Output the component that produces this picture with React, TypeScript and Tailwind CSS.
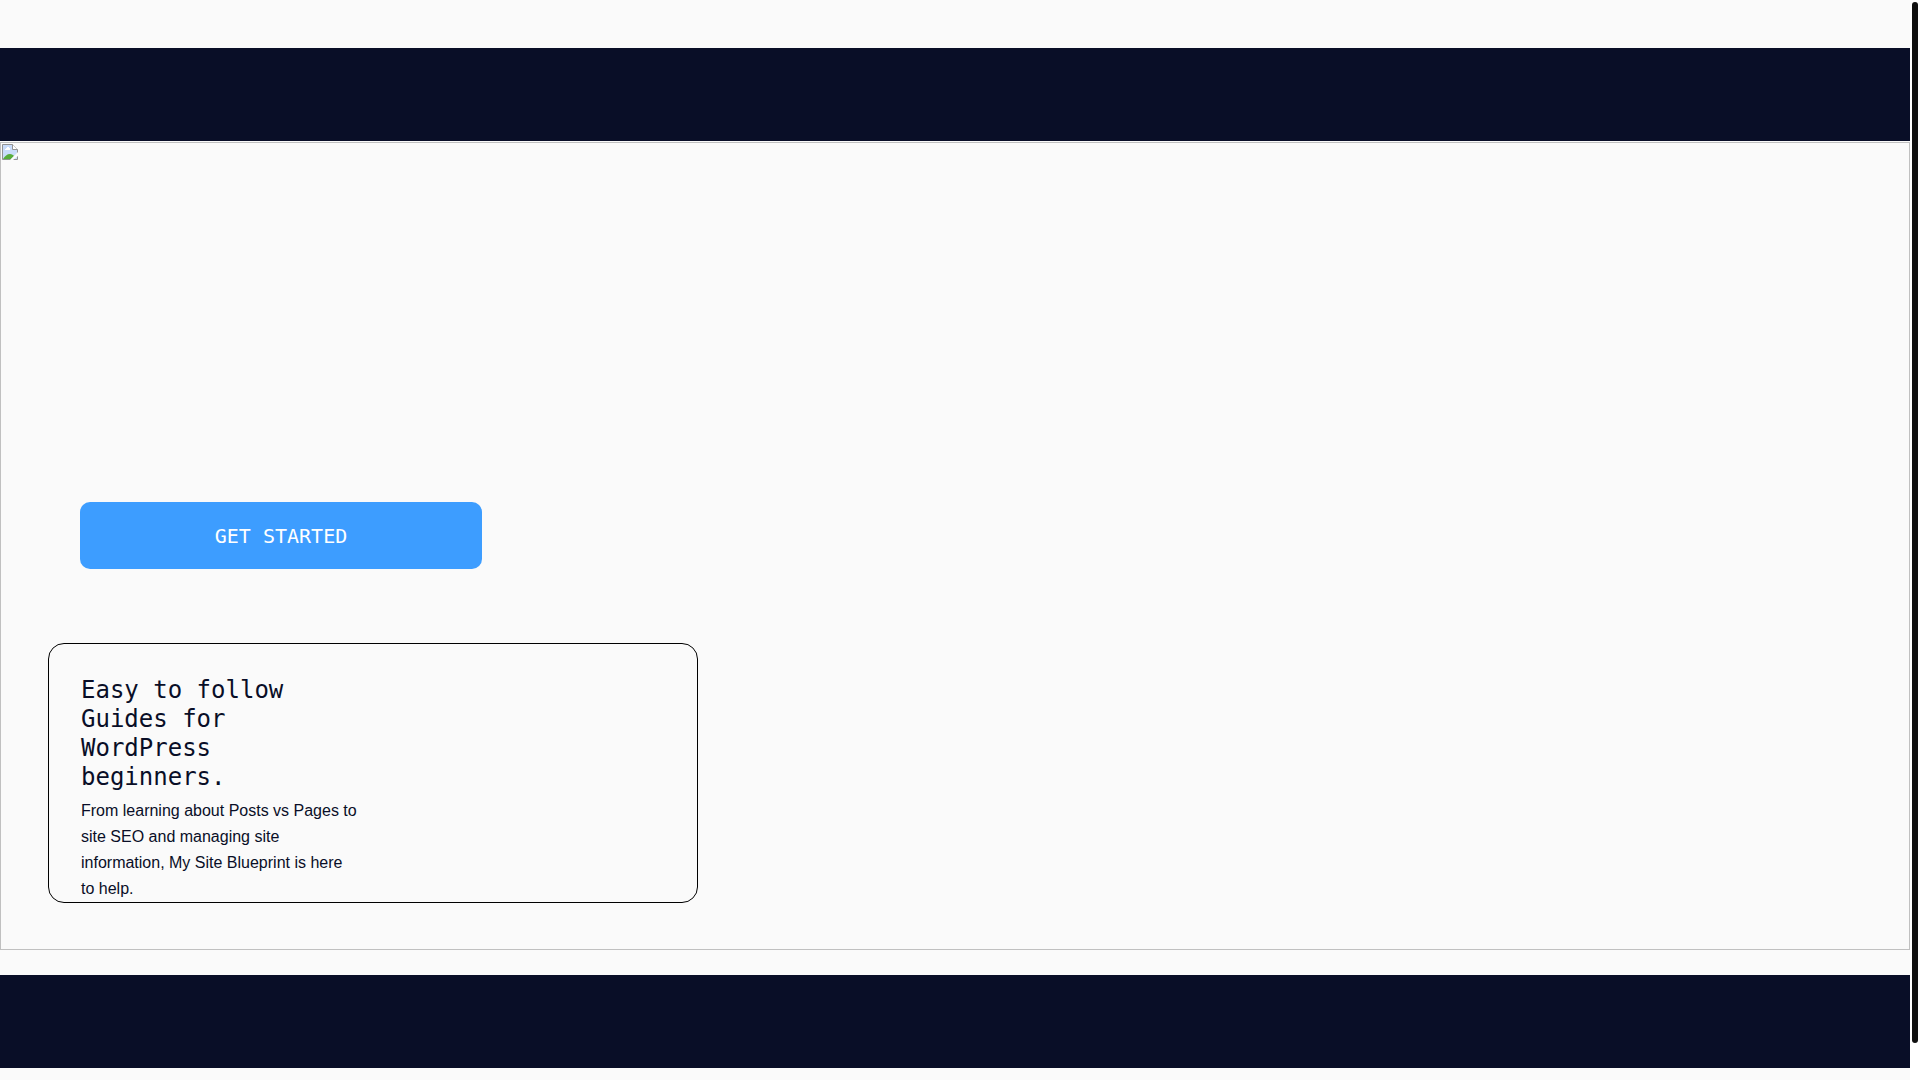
function BrokenImageIcon() {
  return (
    <svg className="m-px" width="16" height="16" viewBox="0 0 16 16" fill="none" aria-hidden="true">
      <path d="M0.5 0.5h10l5 5v10h-15z" fill="#c9dcfa" />
      <path d="M3 5h1V4h1V3h2v1h1v2H3z" fill="#fff" />
      <path d="M1 15c2-3 4-5 7-5 2 0 3 1 4 2l-3 3z" fill="#57ad3b" />
      <path d="M0.5 0.5h10l5 5v10h-15z" stroke="#929292" />
      <path d="M10.5 0.5v5h5" fill="#fff" stroke="#929292" />
      <path d="M16 8L8 16h3l5-4z" fill="#fafafa" />
    </svg>
  )
}

function Band() {
  return <div className="h-[93px] bg-[#090e27]" />
}

function GuideCard() {
  return (
    <section className="ml-[47px] w-[650px] max-w-full rounded-2xl border border-black px-8 pt-8 text-[#090e27]">
      <div className="w-[277px]">
        <h2 className="font-['DejaVu_Sans_Mono',monospace] text-[24px] leading-[29px]">
          Easy to follow Guides for WordPress beginners.
        </h2>
        <p className="mt-1.5 text-[16px] leading-[26px]">
          From learning about Posts vs Pages to site SEO and managing site
          information, My Site Blueprint is here to help.
        </p>
      </div>
    </section>
  )
}

function Hero() {
  return (
    <main className="mt-px border border-[#c0c0c0] pb-[46px]">
      <BrokenImageIcon />
      <button
        type="button"
        className="mt-[342px] ml-[79px] block h-[67px] w-[402px] rounded-[10px] bg-[#3d9dff] font-['DejaVu_Sans_Mono',monospace] text-[20px] text-white"
      >
        GET STARTED
      </button>
      <div className="mt-[74px]">
        <GuideCard />
      </div>
    </main>
  )
}

function Scrollbar() {
  return (
    <div className="flex w-2.5 flex-col bg-white px-0.5 pt-0.5 pb-[37px]" aria-hidden="true">
      <div className="flex-1 rounded-full bg-[#0f0f0f]" />
    </div>
  )
}

export default function App() {
  return (
    <div className="flex min-h-screen bg-[#fafafa] font-['Liberation_Sans',Arial,sans-serif]">
      <div className="flex-1 pt-12">
        <Band />
        <Hero />
        <div className="mt-[25px]">
          <Band />
        </div>
      </div>
      <Scrollbar />
    </div>
  )
}
